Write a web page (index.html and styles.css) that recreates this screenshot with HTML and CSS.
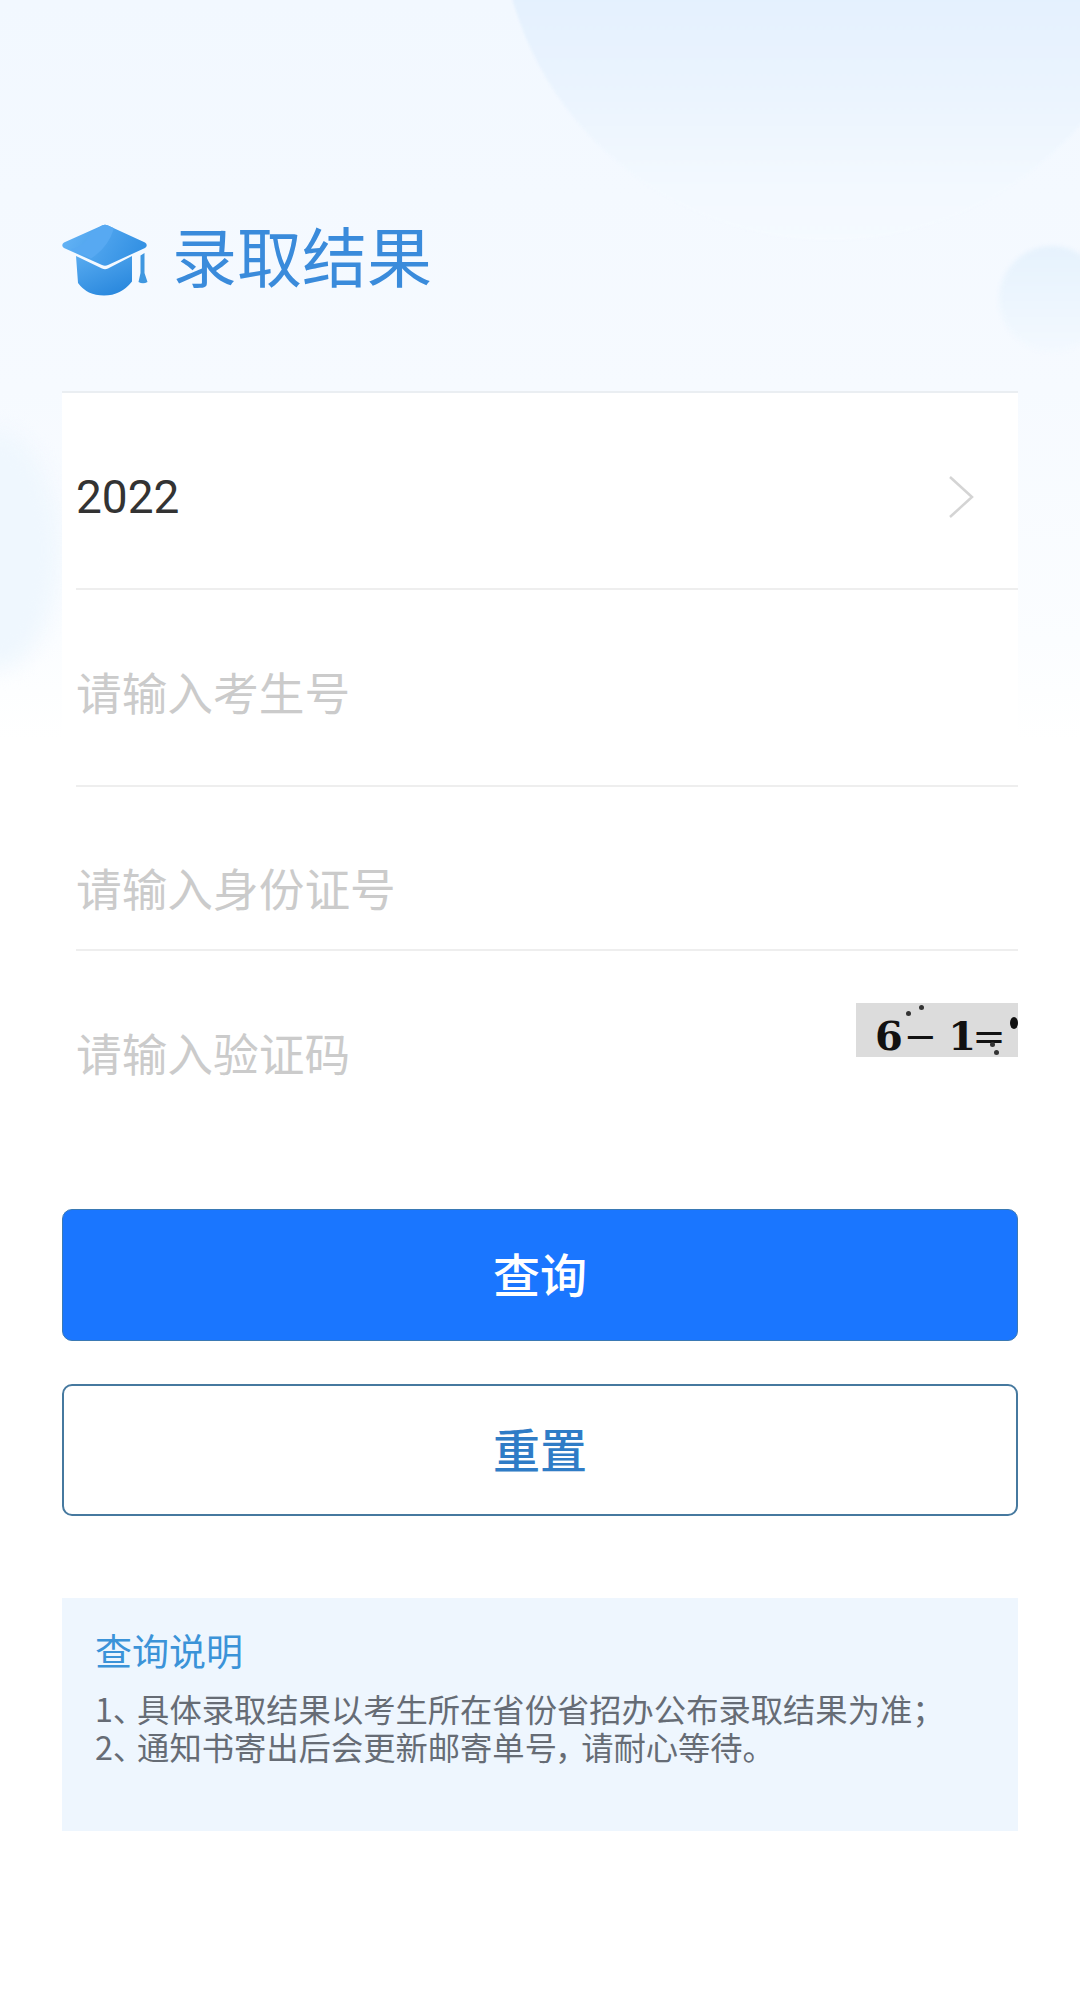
FILE: index.html
```html
<!DOCTYPE html>
<html lang="zh-CN">
<head>
    <meta charset="UTF-8">
    <meta name="viewport" content="width=device-width, initial-scale=1.0">
    <title>录取结果</title>
    <link rel="stylesheet" href="styles.css">
</head>
<body>
    <div class="page">
        <div class="blob blob-top"></div>
        <div class="blob blob-right"></div>
        <div class="blob blob-left"></div>

        <div class="header">
            <svg class="cap" viewBox="0 0 90 72" aria-hidden="true">
                <defs>
                    <linearGradient id="capTop" x1="0" y1="0" x2="1" y2="0.3">
                        <stop offset="0" stop-color="#68b6f7"/>
                        <stop offset="1" stop-color="#3592e4"/>
                    </linearGradient>
                    <linearGradient id="capBody" x1="0" y1="0" x2="0.6" y2="1">
                        <stop offset="0" stop-color="#58abf0"/>
                        <stop offset="1" stop-color="#2b89de"/>
                    </linearGradient>
                </defs>
                <path d="M41 1.500Q44 0 47 1.500L84 18.500Q87.500 21 84 24L47 41Q44 42.500 41 41L3 24Q-.5 21 3 18.500Z" fill="url(#capTop)"/>
                <path d="M30 8.500L41 1.500Q44 0 47 1.500L53 4.300Q47 24 30 34.500L10 25Q22 24 30 8.500Z" fill="#57a9f2"/>
                <path d="M15 32L41 44.500Q44 46 47 44.500L71 32V57.500Q60 71.500 43 71.500Q26 71.500 17 59Z" fill="url(#capBody)"/>
                <path d="M79.500 31.500L83.500 29V49L86.500 58Q82 60.500 77.500 58L79.500 49Z" fill="#3f97e0"/>
            </svg>
            <h1 class="title">录取结果</h1>
        </div>

        <form class="form">
            <div class="row row-year">
                <span class="year">2022</span>
                <svg class="arrow" viewBox="0 0 28 44" aria-hidden="true">
                    <path d="M3 2L25 22L3 42" fill="none" stroke="#d4d4d4" stroke-width="2.500"/>
                </svg>
            </div>
            <div class="row row-id">
                <input class="field" type="text" placeholder="请输入考生号">
            </div>
            <div class="row row-short">
                <input class="field" type="text" placeholder="请输入身份证号">
            </div>
            <div class="row row-code">
                <input class="field" type="text" placeholder="请输入验证码">
                <div class="captcha">
                    <span class="captcha-text">6<i class="minus">−</i>1<i class="equals">=</i></span>
                    <span class="speck speck-a"></span>
                    <span class="speck speck-b"></span>
                    <span class="speck speck-c"></span>
                    <span class="speck speck-d"></span>
                    <span class="speck speck-e"></span>
                </div>
            </div>

            <button class="btn btn-primary" type="button">查询</button>
            <button class="btn btn-plain" type="reset">重置</button>
        </form>

        <div class="note">
            <h2 class="note-title">查询说明</h2>
            <p>1<span class="punct">、</span>具体录取结果以考生所在省份省招办公布录取结果为准<span class="punct">；</span></p>
            <p>2<span class="punct">、</span>通知书寄出后会更新邮寄单号<span class="punct">，</span>请耐心等待。</p>
        </div>
    </div>
</body>
</html>
```

FILE: styles.css
```css
* {
    box-sizing: border-box;
}
body {
    margin: 0;
    background: #fff;
    font-family: "Noto Sans CJK SC", "Noto Sans", sans-serif;
}
.page {
    position: relative;
    height: 1992px;
    padding: 224px 62px 0;
    overflow: hidden;
    background: linear-gradient(#f2f8ff 0, #f6faff 390px, #fbfdff 640px, #fff 740px);
}
.blob {
    position: absolute;
    border-radius: 50%;
}
.blob-top {
    left: 500px;
    top: -420px;
    width: 660px;
    height: 660px;
    background: linear-gradient(#e3f0fe 60%, #ebf4fe 78%, #f3f9ff 92%, #f5faff 100%);
    filter: blur(1px);
}
.blob-right {
    left: 999px;
    top: 246px;
    width: 106px;
    height: 106px;
    background: linear-gradient(#e6f2fd, #f3f9ff);
    filter: blur(2px);
}
.blob-left {
    left: -70px;
    top: 430px;
    width: 130px;
    height: 240px;
    background: #eff7fe;
    filter: blur(10px);
}

.header {
    position: relative;
    display: flex;
    align-items: center;
    height: 72px;
    margin-bottom: 95px;
}
.cap {
    width: 90px;
    height: 72px;
    flex: none;
    margin-left: -1px;
}
.title {
    margin: 0 0 12px 21px;
    font-size: 65px;
    font-weight: 400;
    line-height: 72px;
    color: #3a8bdb;
}

.form {
    position: relative;
    background: #fff;
    border-top: 2px solid #eaeef2;
}
.row {
    display: flex;
    align-items: center;
    margin-left: 14px;
    border-bottom: 2px solid #eeeeee;
}
.row-year {
    height: 197px;
    padding-top: 12px;
}
.row-id {
    height: 197px;
    padding-top: 6px;
}
.row-short {
    height: 164px;
    padding-top: 38px;
}
.row-code {
    align-items: flex-start;
    justify-content: space-between;
    height: 160px;
    padding-top: 52px;
    border-bottom: none;
}
.year {
    font-family: Roboto, sans-serif;
    font-size: 46px;
    color: #333;
}
.arrow {
    width: 28px;
    height: 44px;
    margin-left: auto;
    margin-right: 43px;
}
.field {
    flex: 1;
    min-width: 0;
    padding: 0;
    border: none;
    outline: none;
    background: transparent;
    font-family: inherit;
    font-size: 45.7px;
    color: #333;
}
.field::placeholder {
    color: #cbcbcb;
}
.row-code .field {
    margin-top: 16px;
}

.captcha {
    position: relative;
    flex: none;
    width: 162px;
    height: 54px;
    padding: 6px 0 0 19px;
    background: #dcdcdc;
}
.captcha-text {
    display: block;
    font-family: "DejaVu Serif", serif;
    font-weight: 700;
    font-size: 40px;
    line-height: 54px;
    color: #111;
    white-space: nowrap;
}
.captcha-text i {
    font-style: normal;
    font-weight: 400;
}
.captcha-text .minus {
    margin: 0 11px 0 1px;
}
.captcha-text .equals {
    margin-left: -4px;
}
.speck {
    position: absolute;
    width: 5px;
    height: 5px;
    border-radius: 50%;
    background: #333;
}
.speck-a { left: 50px; top: 8px; }
.speck-b { left: 63px; top: 2px; }
.speck-c { left: 138px; top: 47px; }
.speck-d { left: 154px; top: 14px; width: 8px; height: 12px; background: #111; }
.speck-e { left: 134px; top: 39px; }

.btn {
    display: block;
    width: 100%;
    height: 132px;
    padding: 0 0 6px;
    border-radius: 10px;
    font-family: inherit;
    font-size: 47px;
    font-weight: 500;
}
.btn-primary {
    margin-top: 98px;
    border: 1px solid #3a79b4;
    background: #1a76ff;
    color: #fff;
}
.btn-plain {
    margin-top: 43px;
    border: 2px solid #46799f;
    background: #fff;
    color: #2f7cc6;
}

.note {
    position: relative;
    height: 233px;
    margin-top: 82px;
    padding: 28px 33px 0;
    background: #eef6fe;
    font-size: 32.3px;
    line-height: 38px;
    color: #666c75;
}
.note-title {
    margin: 0 0 15px;
    font-size: 37px;
    font-weight: 400;
    line-height: 48px;
    color: #3b93d8;
}
.note p {
    margin: 0;
}
.punct {
    font-feature-settings: "palt";
    letter-spacing: 8px;
}
```
